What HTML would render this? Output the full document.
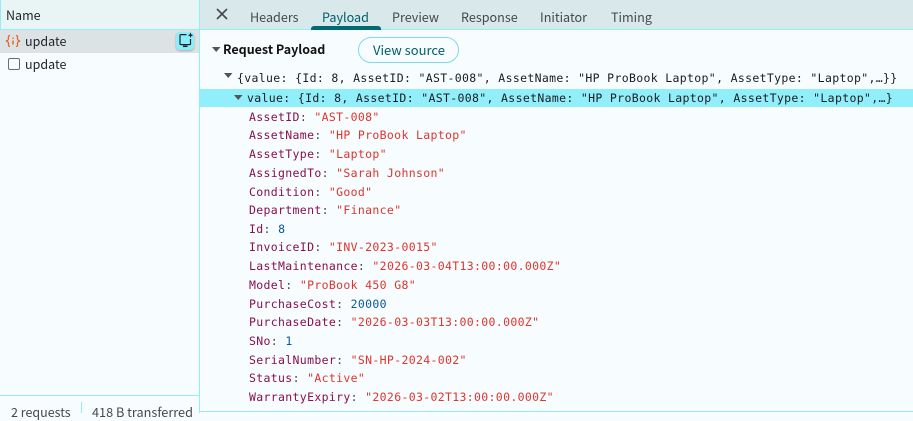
<!DOCTYPE html>
<html><head><meta charset="utf-8"><style>
html,body{margin:0;padding:0;width:913px;height:413px;overflow:hidden;background:#f7fcff}
*{box-sizing:border-box}
.a{position:absolute;white-space:pre}
.s{font-family:"Noto Sans CJK JP","Liberation Sans",sans-serif;font-size:12.5px;line-height:18px;color:#1f2428}
.t{font-family:"Noto Sans CJK JP","Liberation Sans",sans-serif;font-size:12.6px;line-height:18px;top:8px;color:#45494c}
.m{font-family:"DejaVu Sans Mono","Liberation Mono",monospace;font-size:11.5px;letter-spacing:.335px;line-height:16px;color:#1a1d20}
.k{color:#87104f}.v{color:#dc362e}.n{color:#0b57a0}.c{color:#45494c}
</style></head><body>
<div class="a" style="left:0;top:0;width:199px;height:30px;background:#e9f5f5;border-bottom:1px solid #93eef8"></div>
<div class="a" style="left:199px;top:0;width:1px;height:413px;background:#93eef8"></div>
<div class="a" style="left:0;top:0;width:1px;height:30px;background:#93eef8"></div>
<div class="a s" style="left:6px;top:6px">Name</div>
<div class="a" style="left:0;top:30px;width:199px;height:23px;background:#dce3e4"></div>
<svg class="a" style="left:5px;top:34px" width="16" height="14" viewBox="0 0 16 14" fill="none" stroke="#e8662c" stroke-width="1.3"><path d="M5 1.500C3 1.500 3.500 3 3.500 4.500S3 6.500 1 7c2 .5 2.500 1 2.500 2.500S3 12.500 5 12.500"/><path d="M11 1.500c2 0 1.500 1.500 1.500 3S13 6.500 15 7c-2 .5-2.500 1-2.500 2.500s.5 3-1.500 3"/><path d="M8 3.500v1.300M8 6.500v4" stroke-width="1.500"/></svg>
<div class="a s" style="left:25px;top:32px">update</div>
<div class="a" style="left:8px;top:58px;width:12px;height:12px;border:1.500px solid #6b6f72;border-radius:2px;background:#f7fcff"></div>
<div class="a s" style="left:25px;top:55px">update</div>
<div class="a" style="left:176px;top:32px;width:18px;height:18px;background:#8ceefb;border-radius:4px;box-shadow:0 1px 2px rgba(0,0,0,.25)"></div>
<svg class="a" style="left:176px;top:31px" width="18" height="18" viewBox="0 0 18 18" fill="none" stroke="#1f2428" stroke-width="1.200"><path d="M10.500 3.600H5a1 1 0 0 0-1 1v8a1 1 0 0 0 1 1h8.500a1 1 0 0 0 1-1V8"/><path d="M7 15.300h4.500" stroke-width="1.500"/><path d="M14.500 1.500l.8 1.900 1.900.8-1.900.8-.8 1.900-.8-1.900-1.900-.8 1.900-.8z" fill="#1f2428" stroke="none"/></svg>
<div class="a" style="left:0;top:395px;width:199px;height:1px;background:#93eef8"></div>
<div class="a" style="left:81px;top:402px;width:1px;height:11px;background:#93eef8"></div>
<div class="a s" style="left:11px;top:403px;color:#45494c">2 requests</div>
<div class="a s" style="left:92px;top:403px;color:#45494c;font-size:12.7px">418 B transferred</div>

<div class="a" style="left:200px;top:0;width:713px;height:30px;background:#d9e8ea;border-bottom:1px solid #93eef8"></div>
<svg class="a" style="left:215px;top:7px" width="14" height="14" viewBox="0 0 14 14" stroke="#45494c" stroke-width="1.600" fill="none"><path d="M2 2l10 10M12 2L2 12"/></svg>
<div class="a t" style="left:250px">Headers</div>
<div class="a t" style="left:322px;color:#005f6a">Payload</div>
<div class="a" style="left:311px;top:26px;width:70px;height:4px;background:#006a72;border-radius:3px 3px 0 0"></div>
<div class="a t" style="left:392px">Preview</div>
<div class="a t" style="left:461px">Response</div>
<div class="a t" style="left:540px">Initiator</div>
<div class="a t" style="left:611px">Timing</div>

<svg class="a" style="left:212px;top:47px" width="9" height="6"><path d="M0 0h8.500L4.200 5z" fill="#555"/></svg>
<div class="a s" style="left:223px;top:40px;font-weight:700;color:#111">Request Payload</div>
<div class="a" style="left:358px;top:37px;width:101px;height:26px;border:1px solid #7fdbe6;border-radius:13px"></div>
<div class="a s" style="left:373px;top:41px;color:#005f6a;font-size:13px">View source</div>

<svg class="a" style="left:224px;top:73px" width="9" height="6"><path d="M0 0h8.500L4.200 5z" fill="#555"/></svg>
<div class="a m" style="left:237px;top:70px">{value: {Id: 8, AssetID: "AST-008", AssetName: "HP ProBook Laptop", AssetType: "Laptop",…}}</div>
<div class="a" style="left:200px;top:89px;width:713px;height:18px;background:#91eefb"></div>
<svg class="a" style="left:234px;top:95px" width="9" height="6"><path d="M0 0h8.500L4.200 5z" fill="#555"/></svg>
<div class="a m" style="left:247px;top:90px">value: {Id: 8, AssetID: "AST-008", AssetName: "HP ProBook Laptop", AssetType: "Laptop",…}</div>

<div class="a m" style="left:249px;top:109px"><span class="k">AssetID</span><span class="c">: </span><span class="v">"AST-008"</span></div>
<div class="a m" style="left:249px;top:127px"><span class="k">AssetName</span><span class="c">: </span><span class="v">"HP ProBook Laptop"</span></div>
<div class="a m" style="left:249px;top:146px"><span class="k">AssetType</span><span class="c">: </span><span class="v">"Laptop"</span></div>
<div class="a m" style="left:249px;top:165px"><span class="k">AssignedTo</span><span class="c">: </span><span class="v">"Sarah Johnson"</span></div>
<div class="a m" style="left:249px;top:184px"><span class="k">Condition</span><span class="c">: </span><span class="v">"Good"</span></div>
<div class="a m" style="left:249px;top:202px"><span class="k">Department</span><span class="c">: </span><span class="v">"Finance"</span></div>
<div class="a m" style="left:249px;top:221px"><span class="k">Id</span><span class="c">: </span><span class="n">8</span></div>
<div class="a m" style="left:249px;top:239px"><span class="k">InvoiceID</span><span class="c">: </span><span class="v">"INV-2023-0015"</span></div>
<div class="a m" style="left:249px;top:258px"><span class="k">LastMaintenance</span><span class="c">: </span><span class="v">"2026-03-04T13:00:00.000Z"</span></div>
<div class="a m" style="left:249px;top:277px"><span class="k">Model</span><span class="c">: </span><span class="v">"ProBook 450 G8"</span></div>
<div class="a m" style="left:249px;top:296px"><span class="k">PurchaseCost</span><span class="c">: </span><span class="n">20000</span></div>
<div class="a m" style="left:249px;top:314px"><span class="k">PurchaseDate</span><span class="c">: </span><span class="v">"2026-03-03T13:00:00.000Z"</span></div>
<div class="a m" style="left:249px;top:333px"><span class="k">SNo</span><span class="c">: </span><span class="n">1</span></div>
<div class="a m" style="left:249px;top:352px"><span class="k">SerialNumber</span><span class="c">: </span><span class="v">"SN-HP-2024-002"</span></div>
<div class="a m" style="left:249px;top:370px"><span class="k">Status</span><span class="c">: </span><span class="v">"Active"</span></div>
<div class="a m" style="left:249px;top:389px"><span class="k">WarrantyExpiry</span><span class="c">: </span><span class="v">"2026-03-02T13:00:00.000Z"</span></div>
<div class="a" style="left:200px;top:411px;width:713px;height:1px;background:#93eef8"></div>
</body></html>
